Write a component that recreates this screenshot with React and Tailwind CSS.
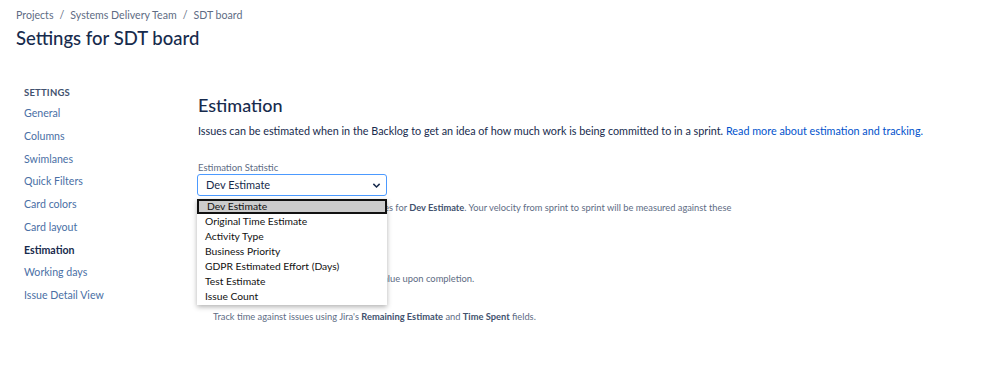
import React from "react";

const navItems = [
  "General",
  "Columns",
  "Swimlanes",
  "Quick Filters",
  "Card colors",
  "Card layout",
  "Estimation",
  "Working days",
  "Issue Detail View",
];

const options = [
  "Dev Estimate",
  "Original Time Estimate",
  "Activity Type",
  "Business Priority",
  "GDPR Estimated Effort (Days)",
  "Test Estimate",
  "Issue Count",
];

const App = () => {
  return (
    <div className="w-[999px] h-[368px] bg-white overflow-hidden text-[#172b4d]" style={{ fontFamily: 'Lato, "Noto Sans", sans-serif' }}>
      {/* Header */}
      <div className="pl-4 pt-[7px]">
        <div className="text-[10.6px] text-[#5e6c84] leading-[16px] flex gap-[6px]">
          <span>Projects</span>
          <span>/</span>
          <span>Systems Delivery Team</span>
          <span>/</span>
          <span>SDT board</span>
        </div>
        <h1 className="text-[18.5px] leading-[26px] mt-[2px] font-medium text-[#172b4d]">Settings for SDT board</h1>
      </div>

      <div className="flex mt-[33px]">
        {/* Sidebar */}
        <div className="w-[198px] pl-6 shrink-0">
          <div className="text-[9.5px] font-bold text-[#42526e] leading-[16px] tracking-[0.2px] mt-[1px]">SETTINGS</div>
          <ul className="mt-[2px]">
            {navItems.map((item) => (
              <li
                key={item}
                className={`h-[22.7px] flex items-center text-[10.6px] ${item === "Estimation" ? "font-bold text-[#172b4d]" : "text-[#4a6fa5]"}`}
              >
                {item}
              </li>
            ))}
          </ul>
        </div>

        {/* Main */}
        <div className="flex-1 pt-[9px]">
          <h2 className="text-[18px] leading-[24px] font-medium">Estimation</h2>
          <p className="text-[10.8px] leading-[16px] mt-[6px]">
            Issues can be estimated when in the Backlog to get an idea of how much work is being committed to in a sprint.{" "}
            <span className="text-[#0052cc]">Read more about estimation and tracking.</span>
          </p>

          <div className="mt-[23px] relative">
            <div className="text-[9.5px] leading-[12px] text-[#5e6c84]">Estimation Statistic</div>
            <div className="w-[190px] h-[22px] -ml-px border border-[#4c9aff] rounded-[3px] flex items-center justify-between pl-[8px] pr-[5px] text-[11px]">
              <span>Dev Estimate</span>
              <svg width="9" height="9" viewBox="0 0 10 10">
                <path d="M1.5 3.2 L5 6.7 L8.5 3.2" fill="none" stroke="#172b4d" strokeWidth="1.6" />
              </svg>
            </div>

            <p className="w-[545px] text-[9.3px] leading-[14px] text-[#5e6c84] mt-[5px]">
              Your team will now estimate each of their issues for <b className="text-[#42526e]">Dev Estimate</b>. Your velocity from sprint to sprint will be measured against these estimates.
            </p>

            <div className="mt-[6px] text-[11px] font-medium leading-[16px]">Time Tracking</div>
            <div className="mt-[4px] text-[10px] leading-[14px] pl-[15px]">None</div>
            <p className="text-[9.4px] leading-[14px] text-[#5e6c84] pl-[15px] mt-[3px]">
              Estimates are burned down by an item's value upon completion.
            </p>
            <div className="mt-[5px] text-[10px] leading-[14px] pl-[15px]">Remaining Estimate and Time Spent</div>
            <p className="text-[9.3px] leading-[14px] text-[#5e6c84] pl-[15px] mt-[5px]">
              Track time against issues using Jira's <b className="text-[#42526e]">Remaining Estimate</b> and <b className="text-[#42526e]">Time Spent</b> fields.
            </p>

            {/* Open select dropdown */}
            <div className="absolute left-[-1px] top-[37px] w-[190px] bg-white shadow-[0_2px_5px_rgba(0,0,0,0.3)] pb-[1px]">
              {options.map((opt, i) => (
                <div
                  key={opt}
                  className={`h-[15px] flex items-center pl-[8px] text-[10.3px] text-[#111] ${i === 0 ? "bg-[#cccccc] border-2 border-[#111] pl-[6px]" : ""}`}
                >
                  {opt}
                </div>
              ))}
            </div>
          </div>
        </div>
      </div>
    </div>
  );
};

export default App;
